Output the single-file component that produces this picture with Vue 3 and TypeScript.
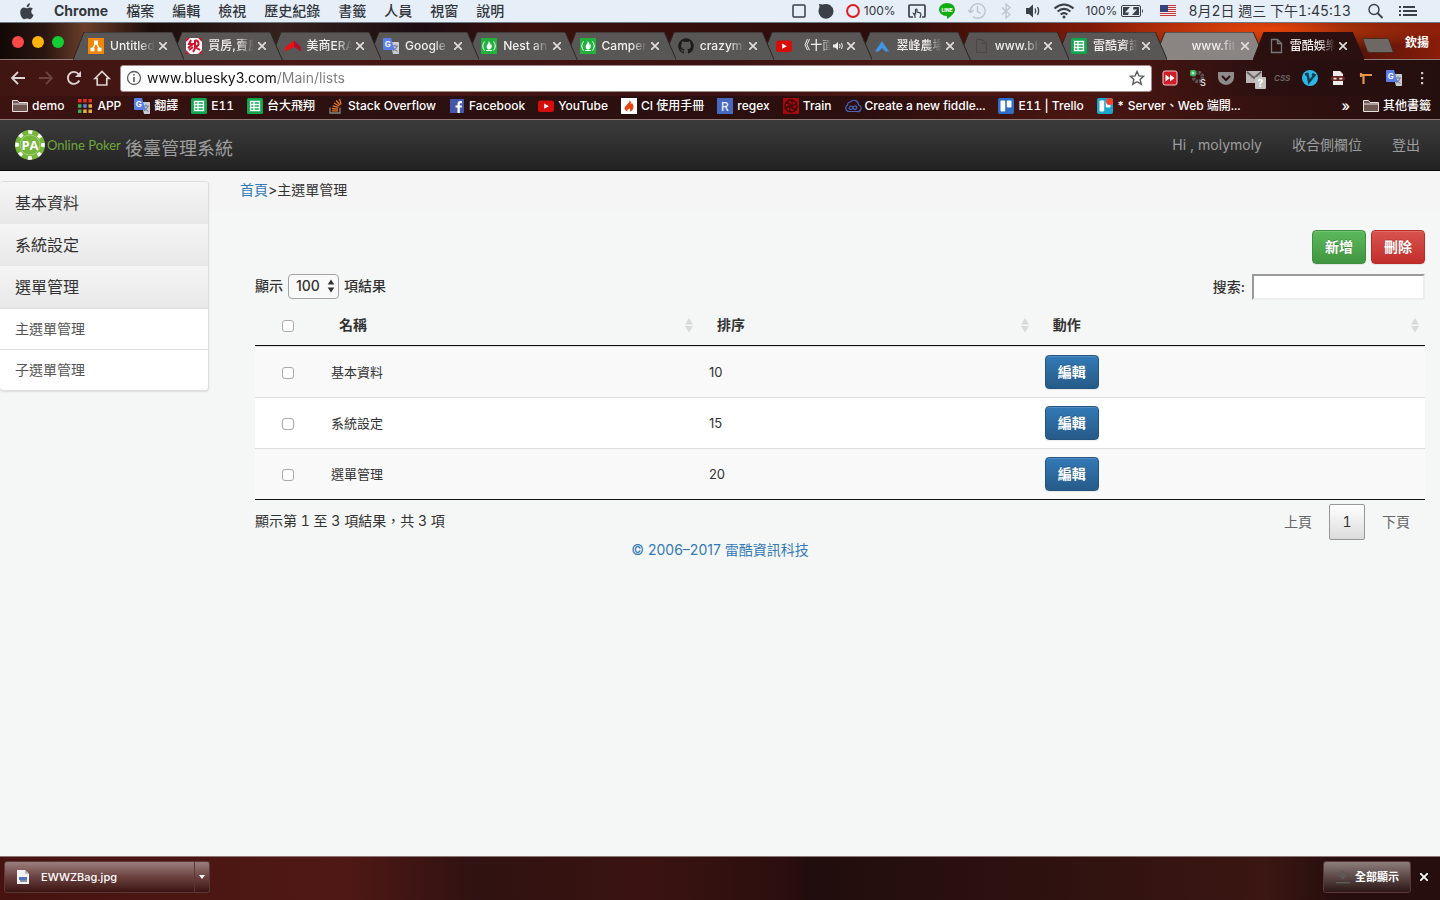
<script setup lang="ts">
import { ref } from 'vue'

interface Tab { icon: string; title: string; audio?: boolean; active?: boolean; light?: boolean }
interface Bookmark { icon: string; label: string }
interface Row { id: number; name: string; order: number }

// Inner markup of 16x16 icons
const gTranslate =
  '<path fill="#c9cdd3" d="M7 4h8.2q.8 0 .8.8v10.4q0 .8-.8.8H10z"/><path stroke="#6d7a8a" fill="none" d="M9 8h6M12 6.5V8M14 8q-1 3.500-4 5M10.500 9.500q1 2.500 4 4"/><path fill="#5b7fe8" d="M1 0h7l3.500 12H1q-1 0-1-1V1q0-1 1-1z"/><text x="1.800" y="9" font-size="8" font-weight="700" fill="#fff" font-family="Inter, sans-serif">G</text>'
const sheet =
  '<rect width="16" height="16" rx="1.500" fill="#12a650"/><path fill="none" stroke="#fff" stroke-width="1.300" d="M3.500 3.500h9v9h-9zM3.500 6.500h9M3.500 9.500h9M7 3.500v9"/>'
const youtube =
  '<rect y="2.500" width="16" height="11.500" rx="2.500" fill="#d60d0d"/><path fill="#fff" d="M6.200 5.600v5.200l4.600-2.600z"/>'
const fcc =
  '<rect width="16" height="16" fill="#22b13c"/><path fill="none" stroke="#fff" d="M3.500 3.500q-3.500 4.500 0 9M12.500 3.500q3.500 4.500 0 9M5 12.500h6"/><path fill="#fff" d="M7.500 3q2.500 2 2 4 .8-.3.800-1 1.500 3-1.300 5.500H7Q4.500 9 6.500 6.500 8 5 7.500 3z"/>'
const folder = '<path fill="#6e5653" stroke="#e8e0df" d="M.5 13.500v-11h5l1.500 2h8.500v9zM.5 6h15"/>'
const page = '<path fill="none" stroke="#777" stroke-width="1.300" d="M3.500 1.500h6l4 4v9h-10zM9.500 1.500v4h4"/>'
const icons: Record<string, string> = {
  gTranslate, sheet, youtube, fcc, folder, page,
  pageDim: '<path fill="none" stroke="#4a4646" d="M3.500 1.500h6l4 4v9h-10zM9.500 1.500v4h4"/>',
  none: '',
  drawio: '<rect width="16" height="16" fill="#f08705"/><path stroke="#fff" stroke-width="1.500" fill="none" d="M8 4.500 4.500 11M8 4.500 11.500 11"/><path fill="#fff" d="M6 2.500h4v3.500H6zM2.500 9.800h4v3.500h-4zM9.500 9.800h4v3.500h-4z"/>',
  house: '<rect width="16" height="16" fill="#fff"/><path fill="#d3122d" d="M0 0h4L0 4zM16 0v4l-4-4zM0 16v-4l4 4zM16 16h-4l4-4z"/><path fill="none" stroke="#d3122d" stroke-width="2" d="M5 2 3 6h4l-5 4M9 2.500a3 3 0 1 1 1 6L7 14M9 2v7l5 3M3 12l4-3"/>',
  era: '<path fill="#ec1016" d="M0 9.500 9 2.500v6.500L0 13.500z"/><path fill="#b0102e" d="m9 2.500 7 6.500v4.500L9 9z"/>',
  github: '<path fill="#1b1b1b" fill-rule="evenodd" d="M8 .3a7.800 7.800 0 0 0-2.500 15.200c.4.100.5-.2.500-.4v-1.500c-2.100.5-2.600-.9-2.600-.9-.4-.9-.9-1.200-.9-1.200-.7-.5.100-.5.100-.5.800.1 1.200.8 1.200.8.700 1.200 1.900.9 2.300.7.100-.5.300-.9.500-1.100-1.700-.2-3.500-.9-3.500-3.900 0-.9.300-1.500.8-2.100-.1-.2-.3-1 .1-2.100 0 0 .7-.2 2.100.8a7 7 0 0 1 3.900 0c1.500-1 2.100-.8 2.100-.8.400 1.100.2 1.900.100 2.100.5.600.8 1.200.8 2.100 0 3-1.800 3.700-3.600 3.900.3.300.6.800.6 1.500v2.200c0 .2.100.5.500.4A7.800 7.800 0 0 0 8 .3z"/>',
  arrow: '<path fill="#3f96e4" d="M8 3 1 13.500h3.500L8 10l3.500 3.500H15z"/>',
  apps: '<path fill="#e03127" d="M1 1h3.500v3.500H1zM6.200 1h3.500v3.500H6.200zM11.500 1H15v3.500h-3.500z"/><path fill="#e6b33a" d="M11.500 6.200H15v3.500h-3.500zM6.200 11.500h3.500V15H6.200zM11.500 11.500H15V15h-3.500z"/><path fill="#3fae56" d="M1 6.200h3.500v3.500H1zM1 11.500h3.500V15H1z"/><path fill="#5b86ee" d="M6.200 6.200h3.500v3.500H6.200z"/>',
  stack: '<path fill="none" stroke="#8c8583" stroke-width="1.300" d="M2 9.500v5.500h10V9.500"/><path fill="none" stroke="#e87a24" stroke-width="1.300" d="M4 12.800h6M4 10.500l6 .6M4.600 7.900l5.700 1.500M6 5l5 3M8.300 2.500l3.700 4.600M11.500 1l1.600 5.500"/>',
  facebook: '<rect x="1" y="1" width="14" height="14" fill="#4557a8"/><path fill="#fff" d="M8.500 15V9.500h-2v-2h2V6q0-3 2.700-3h1.800v2.200h-1.200q-1 0-1 1v1.300H13l-.3 2h-1.900V15z"/>',
  ci: '<rect width="16" height="16" fill="#fff"/><path fill="#e2450f" fill-rule="evenodd" d="M8.500 2q2 2 1.300 4 1 0 1-1.500 3 4 .7 7.500-1 1.200-3 1.700 1.500-2 0-3.500-.6 1.500-1.800 1-1 1 .3 2.200-3-.5-3.500-2.700Q3.500 9 6 6.500 9 4 8.500 2z"/>',
  regex: '<rect width="16" height="16" fill="#4869c0"/><text x="4" y="12.500" font-size="12" fill="#e6ecfa" font-family="Inter, sans-serif">R</text>',
  train: '<rect width="16" height="16" fill="#a30b0b"/><g fill="none" stroke="#420808" stroke-width="1.400"><circle cx="8" cy="8" r="6"/><path d="M8 2q3 3 0 6t0 6M2.800 5Q7 4.500 8 8t5.200 3M2.800 11Q4.500 7.500 8 8t5.200-3"/></g>',
  fiddle: '<path fill="none" stroke="#4b62b8" stroke-width="1.200" d="M4 13.500a3.500 3.500 0 0 1-1.500-6.500 3 3 0 0 1 3-3 4.500 4.500 0 0 1 8 3 3.300 3.300 0 0 1-1.500 6.500z"/><path fill="none" stroke="#4b62b8" stroke-width="1.200" d="M8 9.500Q6 7 4.500 9t1.500 2.500Q7 11.500 8 9.500t3-1.500q1.500 1.500 0 3T8 9.500"/>',
  trello: '<rect width="16" height="16" rx="2" fill="#2d6fc8"/><rect x="2.500" y="2.500" width="4.700" height="11" rx="1" fill="#fff"/><rect x="8.800" y="2.500" width="4.700" height="7" rx="1" fill="#fff"/>',
  trelloDot: '<rect width="16" height="16" rx="2" fill="#1ca8cd"/><rect x="2.500" y="2.500" width="4.700" height="11" rx="1" fill="#fff"/><rect x="8.800" y="2.500" width="4.700" height="7" rx="1" fill="#fff"/><circle cx="12.500" cy="3.500" r="3.500" fill="#f0452d"/>',
  extForward: '<rect x="1" y="1" width="14" height="14" rx="2" fill="#d01c28" stroke="#f3c9cb"/><path fill="#fff" d="M3.500 4.500 8 8l-4.500 3.500zM8 4.500 12.500 8 8 11.500z"/>',
  extGear: '<circle cx="8" cy="7" r="4.500" fill="none" stroke="#5d5353" stroke-width="3.500" stroke-dasharray="2.500 1"/><rect x="0" y="0" width="6" height="6" rx="1.500" fill="#38b35a"/><circle cx="3" cy="3" r="1.500" fill="#b9ecc8"/><text x="10" y="16" font-size="9" font-weight="600" fill="#ddd" font-family="Inter, sans-serif">S</text>',
  extPocket: '<path fill="#8f8a8a" d="M0 2h16v6q-1 6-8 7Q1 14 0 8z"/><path fill="none" stroke="#271211" stroke-width="2" d="m4 6 4 4 4-4"/>',
  extMail: '<path fill="#bcb6b6" d="M0 1h16v12H0z"/><path fill="none" stroke="#675e5e" stroke-width="1.800" d="m1 2 7 6 7-6"/><rect x="9" y="7" width="11" height="12" rx="1" fill="#c4c0c0"/><text x="11.500" y="16.500" font-size="10" font-weight="700" fill="#fff" font-family="Inter, sans-serif">?</text>',
  extCss: '<text x="0" y="11" font-size="8" font-style="italic" font-weight="600" fill="#6f6665" font-family="Inter, sans-serif">CSS</text>',
  extVimeo: '<circle cx="8" cy="8" r="8" fill="#2db7e6"/><path fill="none" stroke="#153b50" stroke-width="2.400" d="m3 4.500 2.500-.5L7 12l5.500-7-2.500-1"/>',
  extSpy: '<path fill="#efebea" d="M3 1h7l3 3v11H3z"/><rect x="1" y="6" width="14" height="5" rx="2.500" fill="#652522"/><path fill="#e8e1df" d="M3.500 7.800h3v1.600h-3zM9.300 7.800h3v1.600h-3z"/>',
  extHammer: '<path fill="none" stroke="#e79546" stroke-width="2.200" d="M2 5h12M5.500 5v9M3 3v4"/>',
  back: '<path fill="none" stroke="#ddd3d2" stroke-width="1.800" d="M15 8H2M8 2 2 8l6 6"/>',
  forward: '<path fill="none" stroke="#6b4340" stroke-width="1.800" d="M1 8h13M8 2l6 6-6 6"/>',
  reload: '<path fill="none" stroke="#ddd3d2" stroke-width="1.900" d="M13.300 10.500A6 6 0 1 1 12.500 4L14 5.500"/><path fill="#ddd3d2" d="M15 1v6H9z"/>',
  home: '<path fill="none" stroke="#ddd3d2" stroke-width="1.700" d="M1 8.500 8 1.500l7 7h-2.200V15H3.200V8.500z"/>',
  dots: '<path fill="#cfc6c5" d="M7 2h2.200v2.200H7zM7 7h2.200v2.200H7zM7 12h2.200v2.200H7z"/>',
}

const menus = ['檔案', '編輯', '檢視', '歷史紀錄', '書籤', '人員', '視窗', '說明']
const tabs: Tab[] = [
  { icon: 'drawio', title: 'Untitled' },
  { icon: 'house', title: '買房,賣房' },
  { icon: 'era', title: '美商ERA' },
  { icon: 'gTranslate', title: 'Google' },
  { icon: 'fcc', title: 'Nest an' },
  { icon: 'fcc', title: 'Camper' },
  { icon: 'github', title: 'crazyms' },
  { icon: 'youtube', title: '《十面', audio: true },
  { icon: 'arrow', title: '翠峰農場' },
  { icon: 'pageDim', title: 'www.blu' },
  { icon: 'sheet', title: '雷酷資訊' },
  { icon: 'none', title: 'www.fit.', light: true },
  { icon: 'page', title: '雷酷娛樂', active: true },
]
const extensions = ['extForward', 'extGear', 'extPocket', 'extMail', 'extCss', 'extVimeo', 'extSpy', 'extHammer', 'gTranslate', 'dots']
const bookmarks: Bookmark[] = [
  { icon: 'folder', label: 'demo' },
  { icon: 'apps', label: 'APP' },
  { icon: 'gTranslate', label: '翻譯' },
  { icon: 'sheet', label: 'E11' },
  { icon: 'sheet', label: '台大飛翔' },
  { icon: 'stack', label: 'Stack Overflow' },
  { icon: 'facebook', label: 'Facebook' },
  { icon: 'youtube', label: 'YouTube' },
  { icon: 'ci', label: 'CI 使用手冊' },
  { icon: 'regex', label: 'regex' },
  { icon: 'train', label: 'Train' },
  { icon: 'fiddle', label: 'Create a new fiddle...' },
  { icon: 'trello', label: 'E11 | Trello' },
  { icon: 'trelloDot', label: '* Server、Web 端開...' },
]
const groups = ['基本資料', '系統設定', '選單管理']
const subItems = ['主選單管理', '子選單管理']
const columns = ['名稱', '排序', '動作']
const rows: Row[] = [
  { id: 1, name: '基本資料', order: 10 },
  { id: 2, name: '系統設定', order: 15 },
  { id: 3, name: '選單管理', order: 20 },
]

const address = ref('www.bluesky3.com/Main/lists')
const pageSize = ref('100')
const keyword = ref('')
const selected = ref<number[]>([])
const toggleAll = (e: Event) => {
  selected.value = (e.target as HTMLInputElement).checked ? rows.map((r) => r.id) : []
}
</script>

<template>
  <div class="desktop">
    <header class="menubar">
      <svg class="apple" width="14" height="17" viewBox="0 0 14 17"><path fill="#3b3f46" d="M9.800.3q.2 1.800-.9 3T6.700 4.300q-.2-1.600.9-2.800T9.800.300zM12.900 5.800q-1.800 1.200-1.700 3 .1 2.200 2.300 3.100-.5 1.500-1.500 2.900t-2.200 1.400q-.5 0-1.300-.4T7 15.400t-1.400.4-1.300.4Q3 16.300 1.700 14.300.200 12 .2 9.200q0-2.300 1.200-3.500t2.700-1.200q.7 0 1.600.4t1.400.4 1.400-.5 1.900-.4q1.600.1 2.500 1.400z"/></svg>
      <nav class="menus">
        <strong>Chrome</strong>
        <span v-for="m in menus" :key="m">{{ m }}</span>
      </nav>
      <div class="status">
        <svg width="14" height="14" viewBox="0 0 14 14"><rect x="1" y="1" width="12" height="12" rx="1" fill="none" stroke="#3b3f46" stroke-width="1.500" /></svg>
        <svg width="16" height="16" viewBox="0 0 16 16"><path fill="#3b3f46" d="M1 1 4 1.500q5-1 8 .5 3 2 3.500 6a7.500 7.500 0 0 1-15 .5Q.500 6 1.500 4z" /></svg>
        <span class="pair">
          <svg width="14" height="14" viewBox="0 0 14 14"><circle cx="7" cy="7" r="5.900" fill="none" stroke="#e01b1f" stroke-width="2" /></svg>
          <span>100%</span>
        </span>
        <svg width="18" height="14" viewBox="0 0 18 14"><path fill="none" stroke="#3b3f46" stroke-width="1.700" d="M5 13H2q-1 0-1-1V2q0-1 1-1h14q1 0 1 1v10q0 1-1 1h-2" /><path fill="none" stroke="#3b3f46" stroke-width="1.200" d="M7 14v-2L5.500 9.500 7.500 10V5.500q.8-.8 1.500 0V8l3 .8q1 .4.900 1.700L12 14" /></svg>
        <svg width="18" height="18" viewBox="0 0 18 18"><path fill="#10ad10" d="M9 1c4.500 0 8 2.800 8 6.500 0 4-5 7.500-8 9.500.3-1.500 0-2.800-.5-3C4.500 14 1 11 1 7.500S4.500 1 9 1z" /><text x="3.500" y="10" font-size="5" font-weight="800" fill="#fff" font-family="Inter, sans-serif">LINE</text></svg>
        <svg width="18" height="18" viewBox="0 0 18 18"><path fill="none" stroke="#bcc3cb" stroke-width="1.400" d="M2.500 9A7.300 7.300 0 1 1 5 14.500M9.500 4v5.500L13 11.500M0 8l2.500 2.500L5.500 8" /></svg>
        <svg width="16" height="18" viewBox="0 0 16 18"><path fill="none" stroke="#bcc3cb" stroke-width="1.200" d="m4 5.500 8 7-4 3.500V2l4 3.500-8 7" /></svg>
        <svg width="16" height="16" viewBox="0 0 16 16"><path fill="#3b3f46" d="M0 5h3l4-3.500v13L3 11H0z" /><path fill="none" stroke="#3b3f46" stroke-width="1.300" d="M9 5.500q1.500 2.500 0 5M11.500 4q2.300 4 0 8" /></svg>
        <svg width="20" height="16" viewBox="2 0 20 16"><g fill="none" stroke="#3b3f46" stroke-width="2"><path d="M2.500 5.500q9.500-8 19 0M5.600 8.500q6.400-5.300 12.800 0M8.600 11.500q3.400-2.800 6.800 0" /></g><circle cx="12" cy="14" r="1.500" fill="#3b3f46" /></svg>
        <span class="pair">
          <span>100%</span>
          <svg width="23" height="12" viewBox="0 0 23 12"><rect x=".5" y=".5" width="19" height="11" rx="1.500" fill="none" stroke="#3b3f46" /><path fill="#3b3f46" d="M2 2h7L4 7.500h4L7 10H2zM12.500 2H18v8h-7l5-5.500h-4zM21 4q2 2 0 4z" /></svg>
        </span>
        <svg width="20" height="12" viewBox="0 0 20 12"><path fill="#f3eaea" d="M4 0h16v12H4z" /><path stroke="#c0393f" d="M4 .5h16M4 2.500h16M4 4.500h16M4 6.500h16M4 8.500h16M4 10.500h16" /><path fill="#34437c" d="M4 0h8v7H4z" /></svg>
        <time>8月2日 週三 下午1:45:13</time>
        <svg width="24" height="16" viewBox="0 0 24 16"><circle cx="11" cy="6.500" r="5" fill="none" stroke="#3b3f46" stroke-width="1.400" /><path stroke="#3b3f46" stroke-width="1.800" d="m14.500 10 5 5" /></svg>
        <svg width="18" height="12" viewBox="0 0 18 12"><path stroke="#3b3f46" stroke-width="1.800" d="M0 2h2M4 2h12M0 6h2M4 6h14M0 10h2M4 10h14" /></svg>
      </div>
    </header>

    <section class="browser">
      <div class="strip">
        <div class="lights"><i class="red"></i><i class="yellow"></i><i class="green"></i></div>
        <div class="tabs" role="tablist">
          <div
            v-for="(t, i) in tabs"
            :key="i"
            class="tab"
            :class="{ active: t.active, light: t.light }"
            :style="{ zIndex: t.active ? 20 : 15 - i }"
            role="tab"
          >
            <svg class="shape" viewBox="0 0 111 28" preserveAspectRatio="none"><path d="M0 28 11 0h88l12 28" vector-effect="non-scaling-stroke" /></svg>
            <svg class="ico" viewBox="0 0 16 16" v-html="icons[t.icon]" />
            <span class="title">{{ t.title }}</span>
            <svg v-if="t.audio" class="audio" width="10" height="10" viewBox="0 0 10 10"><path fill="#eee" d="M0 3.500h2L5 1v8L2 6.500H0z" /><path fill="none" stroke="#eee" d="M6.500 3q1.200 2 0 4M8.500 2q1.700 3 0 6" /></svg>
            <button class="close" aria-label="關閉分頁"><svg width="8" height="8" viewBox="0 0 8 8"><path stroke="#e0dcdc" stroke-width="1.700" d="m0 0 8 8M8 0 0 8" /></svg></button>
          </div>
        </div>
        <div class="strip-end">
          <button class="newtab" aria-label="新分頁"><svg width="32" height="15" viewBox="0 0 32 15"><path fill="#6f6764" stroke="#4b2a20" d="M.5.500H25q1.500 0 2 1L31.500 14.500H8q-2 0-3-2z" /></svg></button>
          <span class="profile">欽揚</span>
        </div>
      </div>

      <div class="toolbar">
        <button v-for="n in ['back', 'forward', 'reload', 'home']" :key="n" class="tool" :aria-label="n"><svg class="ico" viewBox="0 0 16 16" v-html="icons[n]" /></button>
        <div class="omnibox">
          <svg width="16" height="16" viewBox="0 0 16 16"><circle cx="8" cy="8" r="6.500" fill="none" stroke="#5c5c5c" stroke-width="1.300" /><path fill="#5c5c5c" d="M7.200 4h1.600v1.600H7.200zM7.200 7h1.600v5H7.200z" /></svg>
          <input v-model="address" class="address" aria-label="網址" />
          <svg width="16" height="16" viewBox="0 0 16 16"><path fill="none" stroke="#5c5c5c" stroke-width="1.400" d="m8 1.500 1.900 4.400 4.800.4-3.600 3.200 1.100 4.700L8 11.700l-4.200 2.500 1.100-4.700L1.300 6.300l4.800-.4z" /></svg>
        </div>
        <button v-for="n in extensions" :key="n" class="tool" :aria-label="n"><svg class="ico" viewBox="0 0 16 16" v-html="icons[n]" /></button>
      </div>

      <div class="bookmarks">
        <a v-for="b in bookmarks" :key="b.label" href="#"><svg class="ico" viewBox="0 0 16 16" v-html="icons[b.icon]" />{{ b.label }}</a>
        <span class="more">»</span>
        <a href="#"><svg class="ico" viewBox="0 0 16 16" v-html="icons.folder" />其他書籤</a>
      </div>
    </section>

    <div class="page">
      <nav class="navbar">
        <a class="brand" href="#">
          <svg width="30" height="30" viewBox="0 0 30 30">
            <circle cx="15" cy="15" r="15" fill="#76b63a" />
            <circle cx="15" cy="15" r="13" fill="none" stroke="#fff" stroke-width="3.500" stroke-dasharray="4 6.210" transform="rotate(-9 15 15)" />
            <circle cx="15" cy="15" r="10" fill="#76b63a" stroke="#a5d27c" />
            <text x="15" y="19.500" text-anchor="middle" font-size="13" font-weight="700" fill="#fff" font-family="Open Sans, sans-serif">PA</text>
          </svg>
          <span class="poker">Online Poker</span>
          <span class="system">後臺管理系統</span>
        </a>
        <div class="links">
          <a href="#">Hi , molymoly</a>
          <a href="#">收合側欄位</a>
          <a href="#">登出</a>
        </div>
      </nav>

      <div class="body">
        <aside class="side">
          <a v-for="g in groups" :key="g" class="group" href="#">{{ g }}</a>
          <a v-for="s in subItems" :key="s" class="sub" href="#">{{ s }}</a>
        </aside>
        <main class="main">
          <div class="crumb"><a href="#">首頁</a>&gt;主選單管理</div>
          <div class="panel">
            <div class="actions">
              <button class="btn add">新增</button>
              <button class="btn del">刪除</button>
            </div>
            <div class="filters">
              <label class="length">顯示
                <span class="pick">
                  <select v-model="pageSize"><option>100</option><option>50</option></select>
                  <svg width="8" height="14" viewBox="0 0 8 14"><path fill="#333" d="m4 .5 3.300 5H.700zM4 13.500.700 8.500h6.600z" /></svg>
                </span>
                項結果</label>
              <label class="search">搜索:<input v-model="keyword" type="search" /></label>
            </div>
            <table>
              <colgroup><col class="c-check" /><col class="c-name" /><col class="c-order" /><col /></colgroup>
              <thead>
                <tr>
                  <th class="check"><input type="checkbox" aria-label="全選" @change="toggleAll" /></th>
                  <th v-for="c in columns" :key="c">
                    <div class="th">{{ c }}<svg width="10" height="16" viewBox="0 0 10 16"><path fill="#dadada" d="m5 1 4 6.500H1zM5 15.500 1 9h8z" /></svg></div>
                  </th>
                </tr>
              </thead>
              <tbody>
                <tr v-for="r in rows" :key="r.id">
                  <td class="check"><input v-model="selected" type="checkbox" :value="r.id" :aria-label="r.name" /></td>
                  <td>{{ r.name }}</td>
                  <td>{{ r.order }}</td>
                  <td><button class="btn edit">編輯</button></td>
                </tr>
              </tbody>
            </table>
            <div class="foot">
              <span>顯示第 1 至 3 項結果，共 3 項</span>
              <div class="pager">
                <button>上頁</button>
                <button class="current">1</button>
                <button>下頁</button>
              </div>
            </div>
          </div>
        </main>
      </div>
      <footer class="copy"><a href="#">© 2006–2017 雷酷資訊科技</a></footer>
    </div>

    <div class="downloads">
      <div class="file">
        <button class="name">
          <svg width="12" height="14" viewBox="0 0 12 14"><path fill="#f2f2f2" d="M0 0h8l4 4v10H0z" /><path fill="#bbb" d="M8 0v4h4z" /><path fill="#5672b8" d="M2 7h8v3H2z" /><path fill="#8b8fa0" d="M3 10h7v2H3z" /></svg>
          EWWZBag.jpg
        </button>
        <button class="drop" aria-label="選項"><svg width="6" height="4" viewBox="0 0 6 4"><path fill="#fff" d="M0 0h6L3 4z" /></svg></button>
      </div>
      <button class="all">
        <svg width="14" height="13" viewBox="0 0 14 13"><path fill="#5b5a59" d="M5 0h4v4h2.500L7 8.500 2.500 4H5zM0 11h14v1.500H0z" /></svg>
        全部顯示
      </button>
      <button class="shut" aria-label="關閉"><svg width="8" height="8" viewBox="0 0 8 8"><path stroke="#fff" stroke-width="1.800" d="m0 0 8 8M8 0 0 8" /></svg></button>
    </div>
  </div>
</template>

<style>
body { margin: 0; background: #f5f7f6; }
</style>

<style scoped>
* { box-sizing: border-box; }
.desktop {
  display: flex;
  flex-direction: column;
  min-height: 100vh;
  font-family: Inter, "Noto Sans CJK TC", sans-serif;
  font-size: 14px;
  line-height: 20px;
  color: #333;
}
button { font: inherit; color: inherit; border: 0; background: none; padding: 0; }
a { text-decoration: none; color: inherit; }
svg { display: block; flex: none; }
.ico { width: 16px; height: 16px; overflow: visible; }

.menubar {
  display: flex;
  align-items: center;
  height: 23px;
  padding: 0 23px 0 20px;
  background: #e6eef7;
  border-bottom: 1px solid #6d7a85;
  color: #33373d;
  white-space: nowrap;
}
.menus { display: flex; gap: 18px; margin-left: 20px; font-weight: 500; }
.menus strong { font-weight: 700; }
.status { display: flex; align-items: center; gap: 12px; margin-left: auto; }
.status time, .bookmarks, .foot { font-variant-numeric: tabular-nums; }
.pair { display: flex; align-items: center; gap: 4px; font-size: 12px; }

.browser {
  background:
    radial-gradient(ellipse 180px 24px at 1270px 6px, #e4440a, transparent),
    linear-gradient(90deg, #120806 0, #2a1610 45px, #6b3e2a 85px, #1c0d0a 150px, #34211e 280px, #1b0d12 420px, #3c110d 520px, #2b0c0a 900px, #7c1908 1080px, #9d2408 1240px, #4a1109 1340px, #8a1d0a 100%);
}
.strip { display: flex; height: 37px; padding-top: 9px; border-bottom: 1px solid #8f7a77; }
.lights { display: flex; gap: 8px; width: 78px; padding: 4px 12px; }
.lights i { width: 12px; height: 12px; border-radius: 50%; }
.red { background: #fb4948; }
.yellow { background: #fdb50b; }
.green { background: #12ce35; }
.tabs { display: grid; grid-template-columns: repeat(13, minmax(0, 1fr)); flex: 1; }
.tab { position: relative; display: flex; align-items: center; gap: 6px; padding: 0 5px 0 10px; color: #f1eeee; font-size: 12px; font-weight: 500; }
.shape { position: absolute; top: 0; left: -5px; width: calc(100% + 13px); height: 28px; fill: #595656; stroke: #2d2524; }
.light .shape { fill: #8a8482; }
.active .shape { fill: #2a1110; stroke: #2a1110; }
.tab .ico, .title, .audio, .close { position: relative; }
.title { flex: 1; min-width: 0; overflow: hidden; white-space: nowrap; mask-image: linear-gradient(90deg, #000 65%, transparent); }
.audio { margin-left: -4px; }
.close { display: grid; place-items: center; width: 12px; height: 16px; margin: 0 2px 0 -4px; }
.strip-end { display: flex; width: 84px; padding-left: 6px; gap: 11px; align-items: center; color: #fff; font-size: 12px; font-weight: 700; }
.profile { padding-bottom: 6px; }

.toolbar { display: flex; align-items: center; height: 36px; padding: 0 4px; background: linear-gradient(90deg, #401613, #4a1713 20%, #3b1212 50%, #4d1713 62%, #4a1612 78%, #2a1010 88%, #250f0e); }
.tool { display: grid; place-items: center; width: 28px; height: 28px; }
.omnibox { display: flex; align-items: center; gap: 5px; flex: 1; height: 27px; margin: 0 4px; padding: 0 6px 0 5px; border: 1px solid #a08e8c; border-radius: 3px; background: #fff; }
.address {
  flex: 1;
  min-width: 0;
  padding: 0;
  border: 0;
  outline: 0;
  font: inherit;
  color: transparent;
  background: linear-gradient(90deg, #111 130px, #7c7c7c 130px);
  background-clip: text;
}
.bookmarks {
  display: flex;
  align-items: center;
  gap: 13px;
  height: 24px;
  padding: 0 9px 4px 12px;
  border-bottom: 1px solid #917976;
  background: linear-gradient(90deg, #3d1311, #2b1110 22%, #2a0f0e 60%, #4a1612 75%, #30110f 90%, #240f0e);
  color: #fff;
  font-size: 12px;
  font-weight: 500;
  white-space: nowrap;
}
.bookmarks a { display: flex; align-items: center; gap: 4px; }
.more { margin-left: auto; font-size: 14px; }

.page { flex: 1; background: #f5f7f6; }
.navbar {
  display: flex;
  justify-content: space-between;
  align-items: center;
  height: 51px;
  padding: 0 20px 0 15px;
  border-bottom: 1px solid #080808;
  background: linear-gradient(#3c3c3c, #222);
  color: #9d9d9d;
}
.brand { display: flex; align-items: center; gap: 2px; white-space: nowrap; }
.poker { width: 73px; color: #6fa73b; font-family: Lato, sans-serif; font-size: 13px; }
.system { margin-left: 3px; padding-top: 8px; font-size: 18px; }
.links { display: flex; gap: 30px; }
.body { display: grid; grid-template-columns: 209px minmax(0, 1fr); align-items: start; background: linear-gradient(#f5f5f5 39px, transparent 39px); }
.side { margin-top: 10px; border: 1px solid #ddd; border-left: 0; border-radius: 4px; overflow: hidden; background: #fff; box-shadow: 0 1px 2px rgba(0, 0, 0, .1); }
.group, .sub { display: block; padding: 0 15px; }
.group { font-size: 16px; line-height: 42px; background: linear-gradient(#f5f5f5, #e8e8e8); }
.sub { line-height: 40px; border-top: 1px solid #ddd; color: #555; }
.main { padding: 0 15px 0 31px; }
.crumb { padding: 9px 0 10px; }
.crumb a, .copy a { color: #337ab7; }
.panel { padding: 20px 0 0 15px; }
.actions { display: flex; justify-content: flex-end; gap: 5px; }
.btn { display: block; height: 34px; padding: 0 12px; border: 1px solid; border-radius: 4px; color: #fff; font-weight: 700; text-shadow: 0 -1px 0 rgba(0, 0, 0, .2); box-shadow: inset 0 1px 0 rgba(255, 255, 255, .15), 0 1px 1px rgba(0, 0, 0, .075); }
.add { background: linear-gradient(#5cb85c, #419641); border-color: #3e8f3e; }
.del { background: linear-gradient(#d9534f, #c12e2a); border-color: #b92c28; }
.edit { background: linear-gradient(#337ab7, #265a88); border-color: #245580; }
.filters { display: flex; justify-content: space-between; align-items: flex-start; margin-top: 10px; font-weight: 500; }
.length, .search { display: flex; align-items: center; gap: 5px; }
.length { height: 24px; }
.search { gap: 7px; }
.pick { position: relative; display: block; }
.pick svg { position: absolute; right: 4px; top: 5px; pointer-events: none; }
select { appearance: none; display: block; width: 51px; height: 25px; padding: 0 7px; border: 1px solid #a3a3a3; border-radius: 4px; background: #f8f9f8; color: #333; font: inherit; }
.search input { appearance: none; width: 173px; height: 26px; border: 2px solid; border-color: #9a9a9a #eee #eee #9a9a9a; background: #fff; font: inherit; outline: 0; }
table { width: 100%; margin-top: 5px; table-layout: fixed; border-collapse: separate; border-spacing: 0; border-bottom: 1px solid #111; }
.c-check { width: 66px; }
.c-name { width: 32.3%; }
.c-order { width: 28.7%; }
th { height: 41px; padding: 0 5px 0 18px; border-bottom: 1px solid #111; text-align: left; font-weight: 700; }
.th { display: flex; justify-content: space-between; align-items: center; }
td { height: 51px; padding: 8px 10px; border-top: 1px solid #ddd; background: #f9f9f9; font-size: 13px; }
td .btn { font-size: 14px; }
tr:nth-child(even) td { background: #fff; }
th.check, td.check { padding: 0; text-align: center; }
[type="checkbox"] { appearance: none; display: block; width: 12px; height: 12px; margin: 2px auto 0; border: 1px solid #aaa; border-radius: 3px; background: #fff; }
[type="checkbox"]:checked { background: #337ab7; }
.foot { display: flex; justify-content: space-between; padding-top: 4px; }
.foot > span { padding-top: 7px; }
.pager { display: flex; gap: 2px; color: #666; }
.pager button { height: 36px; padding: 0 15px; }
.pager .current { width: 36px; padding: 0; border: 1px solid #979797; border-radius: 2px; background: linear-gradient(#fff, #dcdcdc); color: #333; }
.copy { text-align: center; }

.downloads { display: flex; align-items: center; height: 44px; padding: 0 12px 3px 4px; border-top: 1px solid #8d7876; background: linear-gradient(90deg, #471310, #4f1814 24%, #2f1211 33%, #3a1311 45%, #2a0e0d 55%, #200d0d 56%, #3b1612 88%, #250e0d 93%); color: #fff; font-size: 11px; font-weight: 500; }
.file { display: flex; width: 206px; }
.name, .drop, .all { display: flex; align-items: center; height: 32px; border: 1px solid #5b3836; background: linear-gradient(#9a7f7d, #6b4240 50%, #3b1412); }
.name { flex: 1; gap: 12px; padding-left: 12px; border-radius: 3px 0 0 3px; }
.drop { width: 15px; justify-content: center; border-left: 0; border-radius: 0 3px 3px 0; }
.all { gap: 5px; width: 88px; margin-left: auto; padding-left: 12px; border-radius: 3px; background: linear-gradient(#8c7d7b, #5c4846 50%, #2b1716); font-weight: 700; }
.shut { margin-left: 9px; }
</style>
